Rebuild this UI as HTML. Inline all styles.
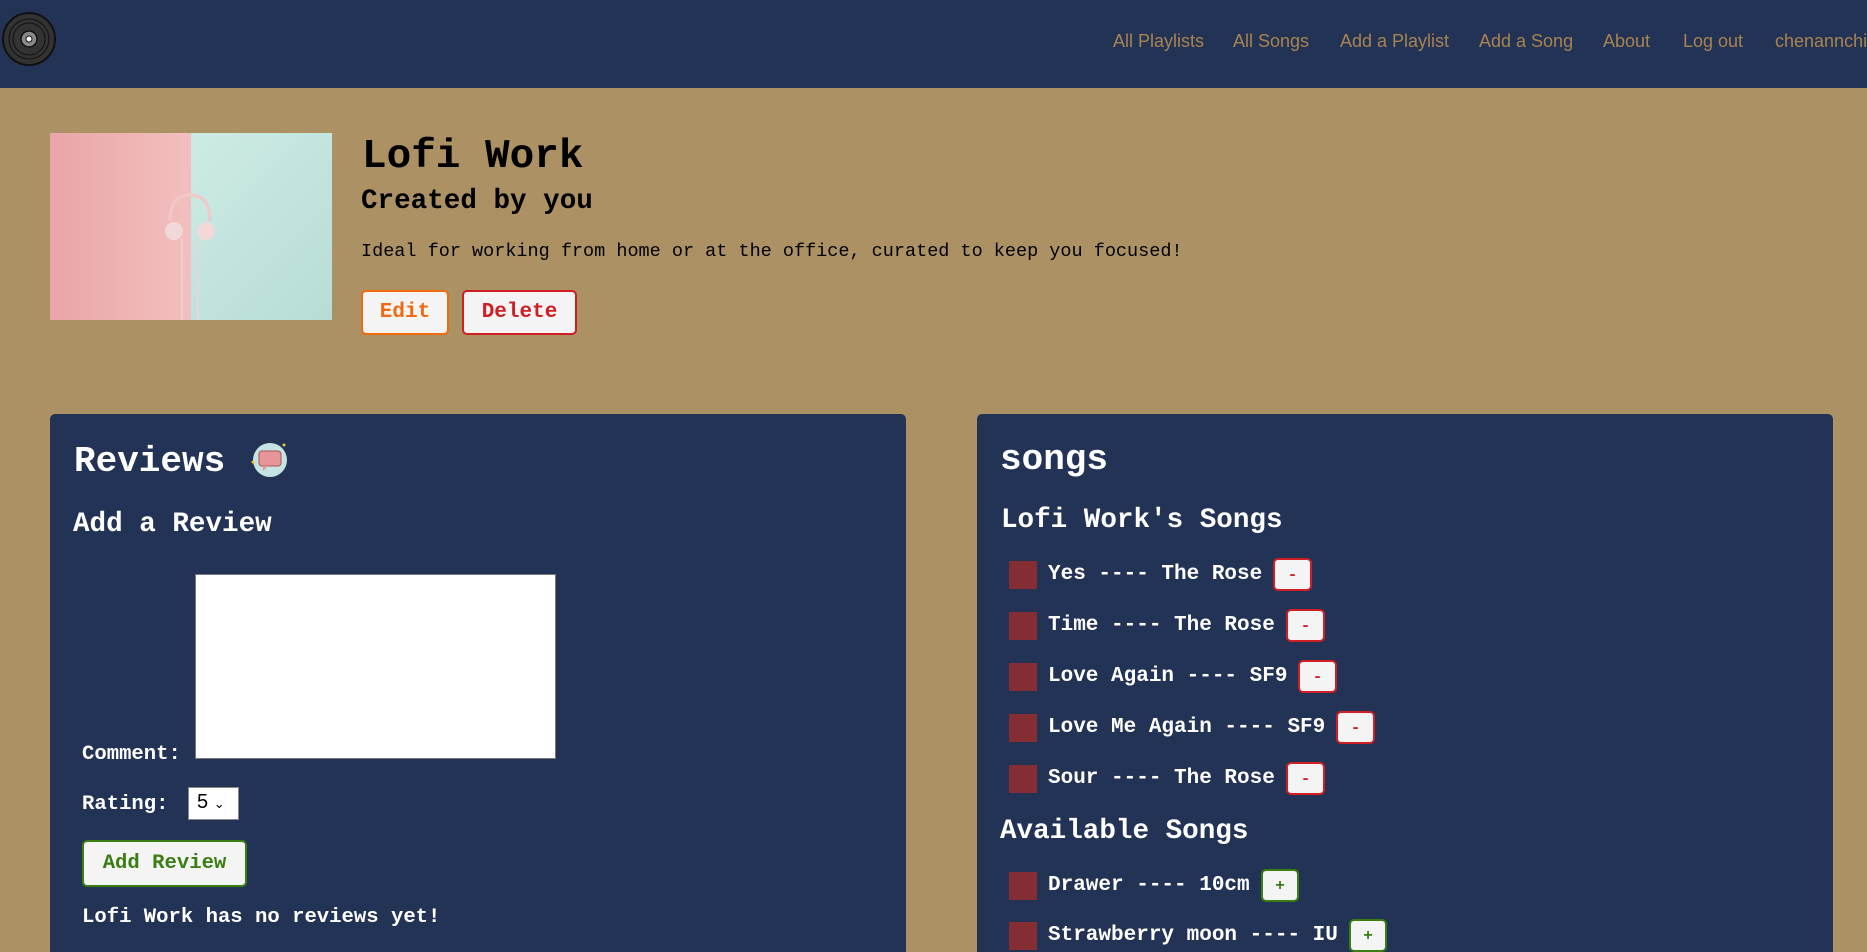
<!DOCTYPE html>
<html><head><meta charset="utf-8"><style>
*{margin:0;padding:0;box-sizing:border-box}
html,body{width:1867px;height:952px;overflow:hidden}
body{background:#ac9165;font-family:"Liberation Mono",monospace;position:relative}
.a{position:absolute;white-space:nowrap}
nav{position:absolute;left:0;top:0;width:1867px;height:88px;background:#233356}
.nl{position:absolute;top:31px;font-family:"Liberation Sans",sans-serif;font-size:18px;color:#a8834f}
.panel{position:absolute;top:414px;height:538px;background:#233356;border-radius:5px 5px 0 0}
.w{color:#fff;font-weight:bold}
.btn{position:absolute;background:#f4f4f4;border:2px solid;border-radius:5px;font-weight:bold;display:flex;align-items:center;justify-content:center;font-family:"Liberation Mono",monospace}
.sq{position:absolute;width:28px;height:28px;background:#842e34}
.st{position:absolute;color:#fff;font-weight:bold;font-size:21px;white-space:pre}
</style></head><body>
<nav>
<svg class="a" style="left:1px;top:11px" width="56" height="56" viewBox="0 0 56 56">
<circle cx="28" cy="28" r="26" fill="#333" stroke="#111" stroke-width="2"/>
<circle cx="28" cy="28" r="20" fill="none" stroke="#111" stroke-width="1"/>
<circle cx="28" cy="28" r="16" fill="none" stroke="#111" stroke-width="1"/>
<circle cx="28" cy="28" r="8" fill="#888" stroke="#111" stroke-width="1.5"/>
<circle cx="28" cy="28" r="3" fill="#fff" stroke="#111"/>
</svg>
<span class="nl" style="left:1113px">All Playlists</span>
<span class="nl" style="left:1233px">All Songs</span>
<span class="nl" style="left:1340px">Add a Playlist</span>
<span class="nl" style="left:1479px">Add a Song</span>
<span class="nl" style="left:1603px">About</span>
<span class="nl" style="left:1683px">Log out</span>
<span class="nl" style="left:1775px">chenannchi</span>
</nav>
<div class="a" style="left:50px;top:133px;width:282px;height:187px;background:linear-gradient(90deg,#e9a5a9,#f5c4c3 60%,#f5c4c3);">
<div style="position:absolute;left:141px;top:0;width:141px;height:187px;background:linear-gradient(135deg,#cdebe5,#b7dcd6)"></div>
<svg style="position:absolute;left:110px;top:60px" width="60" height="127"><path d="M10 28 Q10 2 30 2 Q50 2 50 28" fill="none" stroke="#f0c8c8" stroke-width="3"/><circle cx="14" cy="38" r="9" fill="#f2d8d8"/><circle cx="46" cy="38" r="9" fill="#f2d8d8"/><path d="M22 45 L22 127 M38 45 L38 127" stroke="#f2d2d2" stroke-width="1.5"/></svg>
</div>
<div class="a" style="left:362px;top:134px;font-size:41px;font-weight:bold;color:#000">Lofi Work</div>
<div class="a" style="left:361px;top:186px;font-size:27.6px;font-weight:bold;color:#000">Created by you</div>
<div class="a" style="left:361px;top:241px;font-size:18.5px;color:#000">Ideal for working from home or at the office, curated to keep you focused!</div>
<div class="btn" style="left:361px;top:290px;width:88px;height:45px;border-color:#f26a10;color:#f26a10;font-size:21px">Edit</div>
<div class="btn" style="left:462px;top:290px;width:115px;height:45px;border-color:#cf1f24;color:#cf1f24;font-size:21px">Delete</div>

<div class="panel" style="left:50px;width:856px"></div>
<div class="a w" style="left:74px;top:441px;font-size:36px">Reviews</div>
<svg class="a" style="left:250px;top:440px" width="40" height="40"><circle cx="20" cy="20" r="17" fill="#c4e3e2"/><rect x="9" y="11" width="22" height="15" rx="3" fill="#e8959a" stroke="#a55" stroke-width="1"/><path d="M13 26 L13 31 L18 26" fill="#e8959a"/><circle cx="34" cy="5" r="1.5" fill="#f2c230"/><circle cx="3" cy="22" r="1.5" fill="#f2c230"/></svg>
<div class="a w" style="left:73px;top:509px;font-size:27.6px">Add a Review</div>
<div class="a w" style="left:82px;top:743px;font-size:20.6px">Comment:</div>
<div class="a" style="left:195px;top:574px;width:361px;height:185px;background:#fff;border:1px solid #777"></div>
<div class="a w" style="left:82px;top:793px;font-size:20.6px">Rating:</div>
<div class="a" style="left:188px;top:787px;width:51px;height:33px;background:#fff;border:1px solid #888;font-family:'Liberation Sans',sans-serif;font-size:20px;padding:3px 0 0 8px">5 <span style="font-size:13px">&#8964;</span></div>
<div class="btn" style="left:82px;top:840px;width:165px;height:47px;border-color:#3a7d12;color:#3a7d12;font-size:20.6px">Add Review</div>
<div class="a w" style="left:82px;top:906px;font-size:20.6px">Lofi Work has no reviews yet!</div>

<div class="panel" style="left:977px;width:856px"></div>
<div class="a w" style="left:1000px;top:439px;font-size:36px">songs</div>
<div class="a w" style="left:1001px;top:505px;font-size:27.6px">Lofi Work's Songs</div>
<div class="sq" style="left:1009px;top:561px"></div><div class="st" style="left:1048px;top:563px">Yes ---- The Rose</div><div class="btn" style="left:1273px;top:558px;width:39px;height:33px;border-color:#cf1f24;color:#cf1f24;font-size:16px">-</div>
<div class="sq" style="left:1009px;top:612px"></div><div class="st" style="left:1048px;top:614px">Time ---- The Rose</div><div class="btn" style="left:1286px;top:609px;width:39px;height:33px;border-color:#cf1f24;color:#cf1f24;font-size:16px">-</div>
<div class="sq" style="left:1009px;top:663px"></div><div class="st" style="left:1048px;top:665px">Love Again ---- SF9</div><div class="btn" style="left:1298px;top:660px;width:39px;height:33px;border-color:#cf1f24;color:#cf1f24;font-size:16px">-</div>
<div class="sq" style="left:1009px;top:714px"></div><div class="st" style="left:1048px;top:716px">Love Me Again ---- SF9</div><div class="btn" style="left:1336px;top:711px;width:39px;height:33px;border-color:#cf1f24;color:#cf1f24;font-size:16px">-</div>
<div class="sq" style="left:1009px;top:765px"></div><div class="st" style="left:1048px;top:767px">Sour ---- The Rose</div><div class="btn" style="left:1286px;top:762px;width:39px;height:33px;border-color:#cf1f24;color:#cf1f24;font-size:16px">-</div>
<div class="a w" style="left:1000px;top:816px;font-size:27.6px">Available Songs</div>
<div class="sq" style="left:1009px;top:872px"></div><div class="st" style="left:1048px;top:874px">Drawer ---- 10cm</div><div class="btn" style="left:1261px;top:869px;width:38px;height:33px;border-color:#3a7d12;color:#3a7d12;font-size:16px">+</div>
<div class="sq" style="left:1009px;top:922px"></div><div class="st" style="left:1048px;top:924px">Strawberry moon ---- IU</div><div class="btn" style="left:1349px;top:919px;width:38px;height:33px;border-color:#3a7d12;color:#3a7d12;font-size:16px">+</div>
</body></html>
